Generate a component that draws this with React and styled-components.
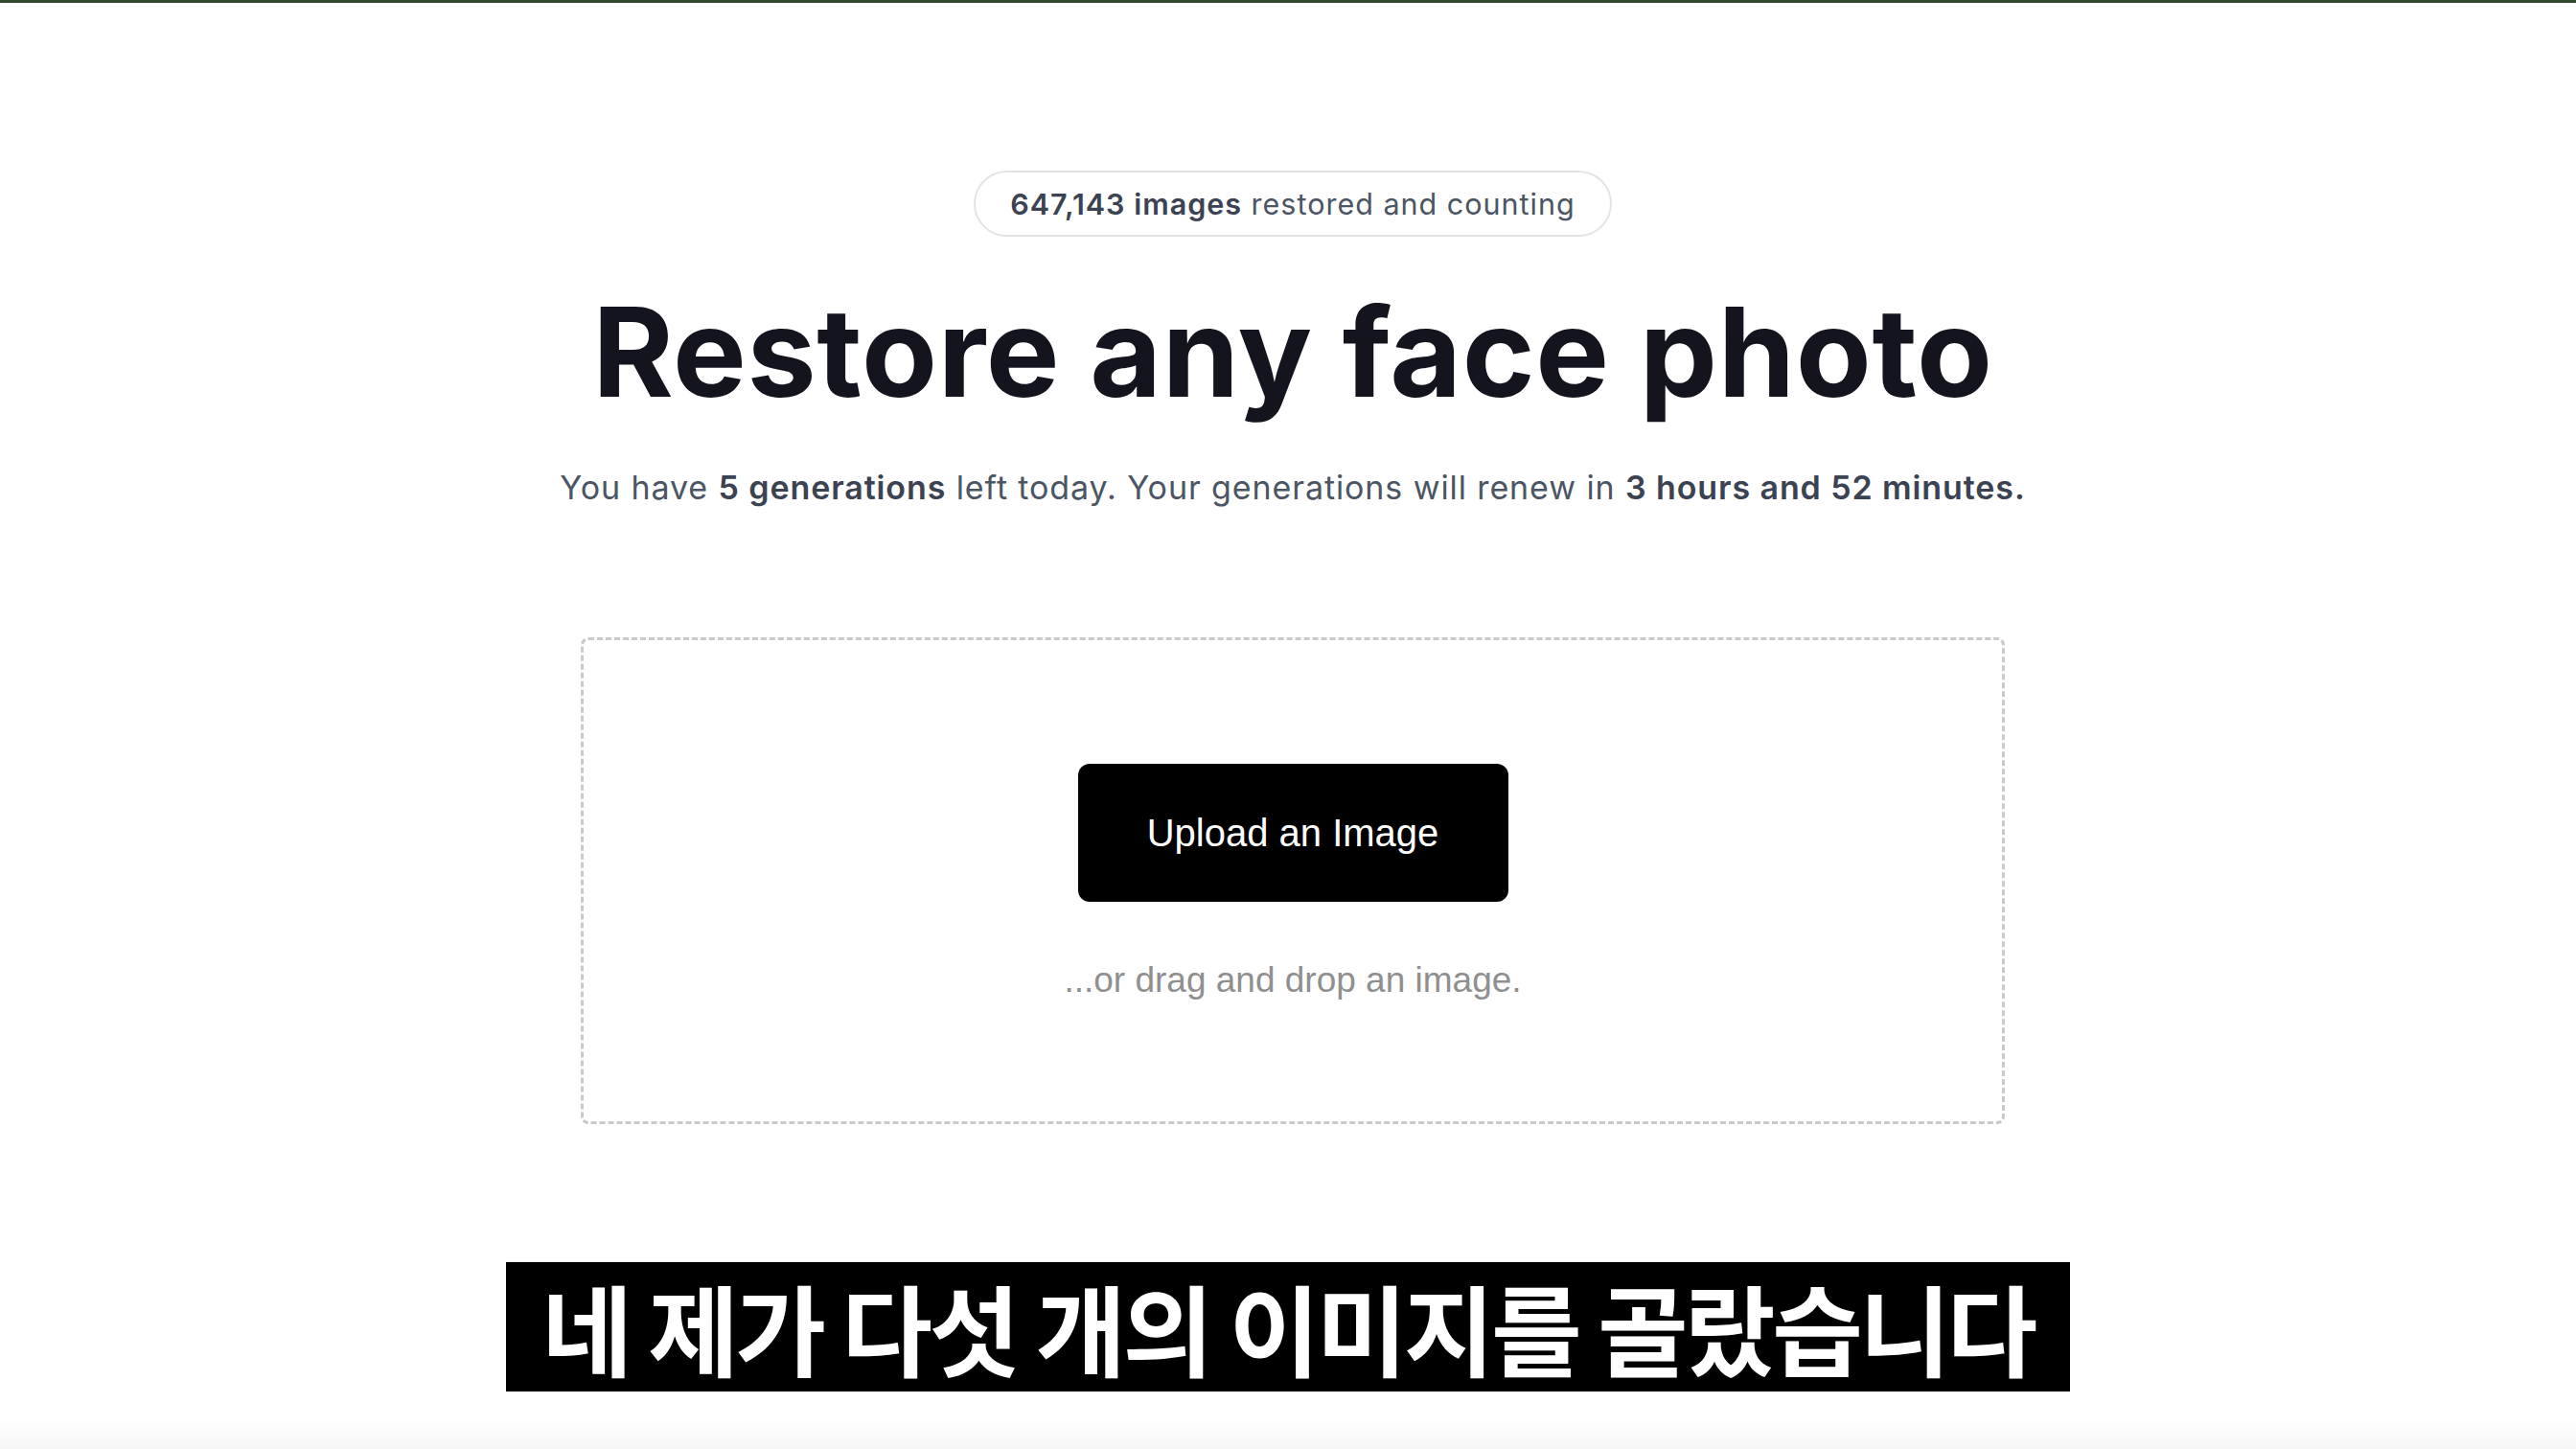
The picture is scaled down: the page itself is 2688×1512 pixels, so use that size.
import React from 'react'
import styled, { createGlobalStyle } from 'styled-components'

const Global = createGlobalStyle`
  html, body {
    margin: 0;
    padding: 0;
    background: #ffffff;
  }
  body {
    font-family: Inter, "Noto Sans", sans-serif;
  }
`

const Page = styled.div`
  width: 2688px;
  height: 1512px;
  overflow: hidden;
  display: flex;
  flex-direction: column;
  align-items: center;
  background: linear-gradient(to bottom, #fff 0, #fff 1480px, #f6f6f6 1512px);
`

const TopBar = styled.div`
  align-self: stretch;
  height: 3px;
  background: #2e4a2b;
`

const Main = styled.main`
  align-self: stretch;
  padding-left: 10px;
  display: flex;
  flex-direction: column;
  align-items: center;
`

const Pill = styled.div`
  margin-top: 175px;
  height: 69px;
  box-sizing: border-box;
  padding: 0 36px;
  display: flex;
  align-items: center;
  border: 2px solid #e2e4e8;
  border-radius: 999px;
  font-size: 30.5px;
  letter-spacing: 1px;
  color: #4b5563;
  font-weight: 400;
`

const Strong = styled.b`
  font-weight: ${p => p.weight || 600};
  color: #3b4252;
`

const Heading = styled.h1`
  margin: 50px 0 0;
  font-size: 129px;
  line-height: 141px;
  font-weight: 700;
  letter-spacing: 0.6px;
  color: #14141f;
`

const Sub = styled.p`
  margin: 49px 0 0;
  font-size: 34px;
  line-height: 44px;
  color: #4b5563;
  letter-spacing: 0.9px;
`

const DropZone = styled.div`
  margin-top: 134px;
  width: 1486px;
  height: 508px;
  box-sizing: border-box;
  border: 3px dashed #c9c9cb;
  border-radius: 8px;
  display: flex;
  flex-direction: column;
  align-items: center;
  padding-top: 129px;
`

const UploadButton = styled.button`
  width: 449px;
  height: 144px;
  border: none;
  border-radius: 12px;
  background: #000;
  color: #fff;
  font-family: "Liberation Sans", Arial, sans-serif;
  font-size: 40px;
  cursor: pointer;
`

const Hint = styled.div`
  margin-top: 60px;
  font-family: "Liberation Sans", Arial, sans-serif;
  font-size: 37px;
  line-height: 44px;
  color: #8f8f8f;
`

const Caption = styled.div`
  margin-top: 144px;
  width: 1632px;
  height: 135px;
  background: #000;
  color: #fff;
  display: flex;
  align-items: center;
  justify-content: center;
  font-family: "Noto Sans CJK KR", sans-serif;
  font-weight: 700;
  font-size: 103px;
  letter-spacing: -3.6px;
  white-space: nowrap;
`

export default function App() {
  return (
    <>
      <Global />
      <Page>
        <TopBar />
        <Main>
          <Pill>
            <Strong>647,143 images</Strong>&nbsp;restored and counting
          </Pill>
          <Heading>Restore any face photo</Heading>
          <Sub>
            You have <Strong>5 generations</Strong> left today. Your generations will renew in{' '}
            <Strong>3 hours and 52 minutes.</Strong>
          </Sub>
          <DropZone>
            <UploadButton>Upload an Image</UploadButton>
            <Hint>...or drag and drop an image.</Hint>
          </DropZone>
        </Main>
        <Caption>네 제가 다섯 개의 이미지를 골랐습니다</Caption>
      </Page>
    </>
  )
}
